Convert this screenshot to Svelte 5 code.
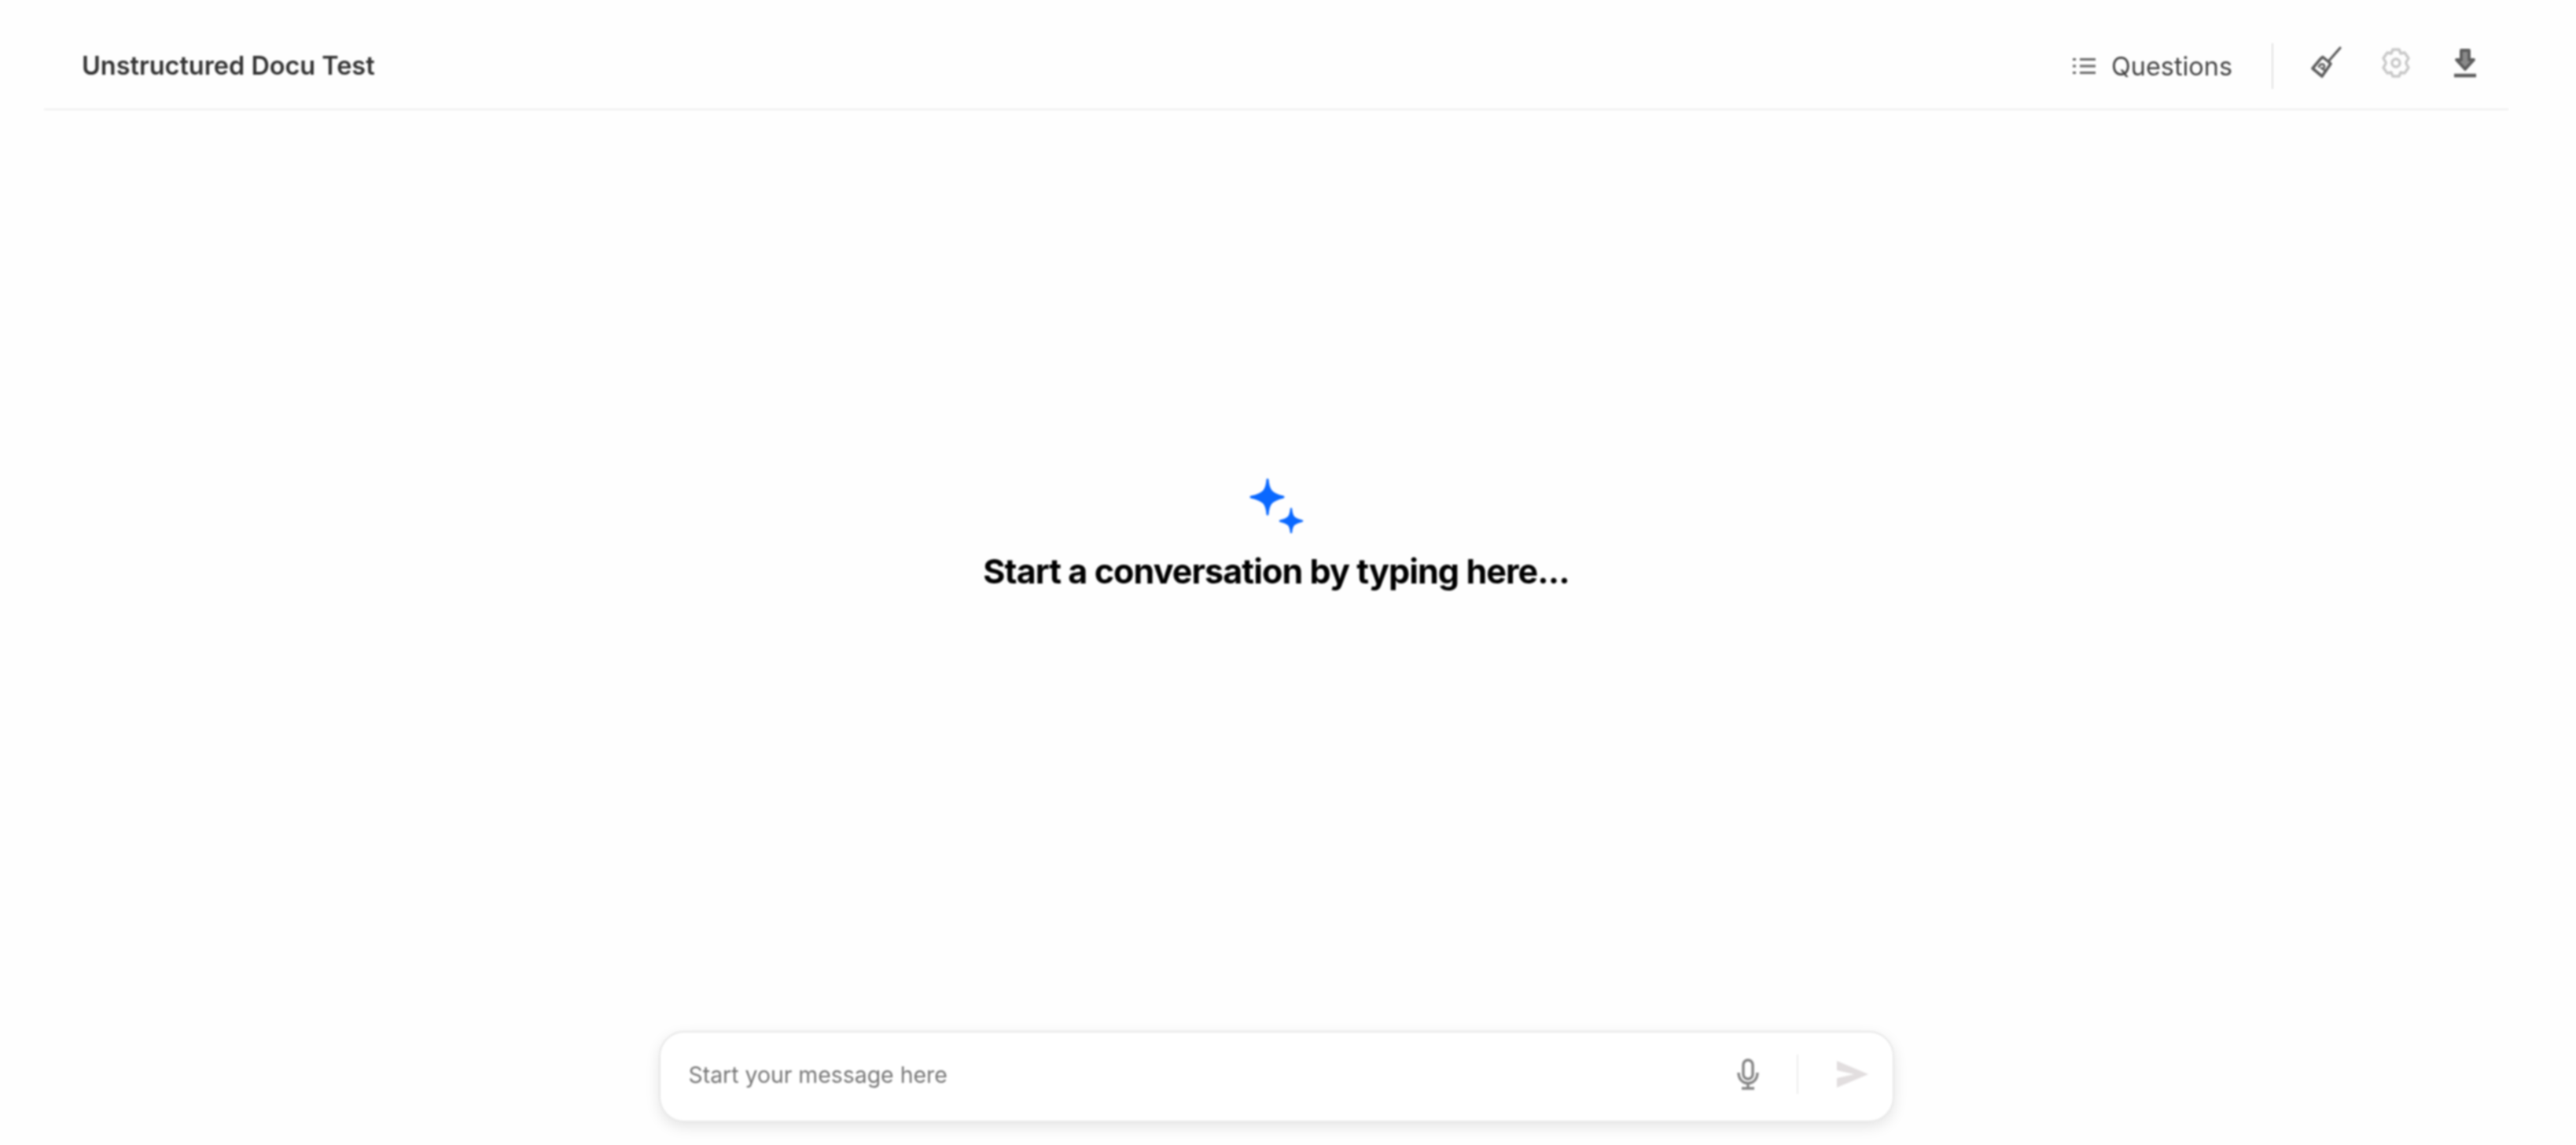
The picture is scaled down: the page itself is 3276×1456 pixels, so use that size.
<script>
  const title = 'Unstructured Docu Test';
</script>

<div class="page">
  <header class="topbar">
    <h1 class="title">{title}</h1>
    <div class="actions">
      <button class="questions">
        <svg class="list" viewBox="0 0 30 24" width="30" height="24" aria-hidden="true">
          <g fill="none" stroke="#6a6a6a" stroke-width="3">
            <path d="M0 3.500h4M9 3.500h20M0 12h4M9 12h20M0 20.500h4M9 20.500h20" />
          </g>
        </svg>
        <span>Questions</span>
      </button>
      <span class="vrule"></span>
      <div class="icons">
        <svg viewBox="0 0 40 44" width="40" height="44" aria-hidden="true">
          <g fill="none" stroke="#5c5c5c" stroke-width="3.600" stroke-linejoin="round" stroke-linecap="round">
            <path d="M23 19 37 3" stroke-width="3.200" />
            <path d="M15 14.500 25 23 23 26 14 39 2 29 12 17Z" />
            <path d="M10 27c2-5 7-4 7-.5 0 3-3 3-4 2l6 4" stroke-width="2.600" />
          </g>
        </svg>
        <svg class="gear" viewBox="0 0 36 40" width="36" height="40" aria-hidden="true">
          <g fill="none" stroke="#c8c8c8" stroke-width="3.400" stroke-linejoin="round">
            <path d="M14 3h8l2 5 5-1 5 7-3 5 0 2 3 5-5 7-5-1-2 5h-8l-2-5-5 1-5-7 3-5v-2l-3-5 5-7 5 1Z" />
            <circle cx="18" cy="20" r="5" />
          </g>
        </svg>
        <svg viewBox="0 0 32 38" width="32" height="38" aria-hidden="true">
          <path d="M11 3h10v12h6L16 27 5 15h6Z" fill="#8a8a8a" stroke="#5c5c5c" stroke-width="3.800" stroke-linejoin="round" />
          <path d="M2 35h28" stroke="#5c5c5c" stroke-width="4.500" />
        </svg>
      </div>
    </div>
  </header>

  <main class="empty">
    <svg class="spark" viewBox="0 0 72 70" width="72" height="70" aria-hidden="true">
      <path fill="#0a68ff" stroke="#0a68ff" stroke-width="3" stroke-linejoin="round" d="M24 2C25 15 28 20 44 24 28 28 25 33 24 46 23 33 20 28 3 24 20 20 23 15 24 2Z" />
      <path fill="#0a68ff" stroke="#0a68ff" stroke-width="2.400" stroke-linejoin="round" d="M54 39C55 49 57 52 68 54.500 57 57 55 60 54 69 53 60 51 57 40 54.500 51 52 53 49 54 39Z" />
    </svg>
    <h2 class="prompt">Start a conversation by typing here...</h2>
  </main>

  <footer class="composer-wrap">
    <div class="composer">
      <span class="placeholder">Start your message here</span>
      <svg class="mic" viewBox="0 0 28 40" width="28" height="40" aria-hidden="true">
        <g fill="none" stroke="#858585" stroke-width="3.400">
          <rect x="8" y="2" width="12" height="24" rx="6" />
          <path d="M2 18c0 18 24 18 24 0M14 31v6M6 38h16" />
        </g>
      </svg>
      <span class="sep"></span>
      <svg class="send" viewBox="0 0 42 36" width="42" height="36" aria-hidden="true">
        <path fill="#e2dedf" d="M1 1 41 18 1 35V23l22-5L1 13Z" />
      </svg>
    </div>
  </footer>
</div>

<style>
  :global(body) {
    margin: 0;
    background: #fefefe;
    font-family: "Inter", "Liberation Sans", sans-serif;
  }

  .page {
    width: 3134px;
    height: 1456px;
    margin-left: 56px;
    display: flex;
    flex-direction: column;
    box-sizing: border-box;
    filter: blur(0.8px);
  }

  .topbar {
    flex: none;
    height: 140px;
    box-sizing: border-box;
    border-bottom: 2px solid #eeeeee;
    display: flex;
    align-items: center;
    justify-content: space-between;
    padding: 30px 39px 0 48px;
  }

  .title {
    margin: 0;
    font-size: 32.4px;
    font-weight: 600;
    color: #333;
    line-height: 1;
  }

  .actions {
    display: flex;
    align-items: center;
  }

  .questions {
    display: flex;
    align-items: center;
    gap: 19px;
    border: 0;
    background: none;
    padding: 0;
    font: inherit;
    font-size: 32.4px;
    color: #444;
  }

  .vrule {
    width: 2px;
    height: 58px;
    background: #e2e2e2;
    margin-left: 50px;
  }

  .icons {
    display: flex;
    align-items: center;
    gap: 50px;
    margin: -8px 0 0 48px;
  }

  .gear {
    margin-right: 4px;
  }

  .empty {
    flex: 1;
    display: flex;
    flex-direction: column;
    align-items: center;
    justify-content: center;
    padding-bottom: 88px;
    gap: 18px;
  }

  .spark {
    display: block;
    margin-left: 2px;
  }

  .prompt {
    margin: 0;
    font-size: 43px;
    font-weight: 700;
    letter-spacing: -0.9px;
    line-height: 60px;
    color: #000;
  }

  .composer-wrap {
    flex: none;
    display: flex;
    justify-content: center;
    padding-bottom: 29px;
  }

  .composer {
    width: 1571px;
    height: 116px;
    box-sizing: border-box;
    border: 2px solid #e8e8e8;
    border-radius: 32px;
    background: #fff;
    box-shadow: 0 6px 18px rgba(0, 0, 0, 0.1);
    display: flex;
    align-items: center;
    padding: 0 30px 6px 36px;
  }

  .placeholder {
    flex: 1;
    font-size: 28.4px;
    color: #777;
  }

  .mic {
    margin-right: 48px;
  }

  .sep {
    width: 2px;
    height: 50px;
    background: #eeeeee;
    margin-right: 48px;
  }
</style>
